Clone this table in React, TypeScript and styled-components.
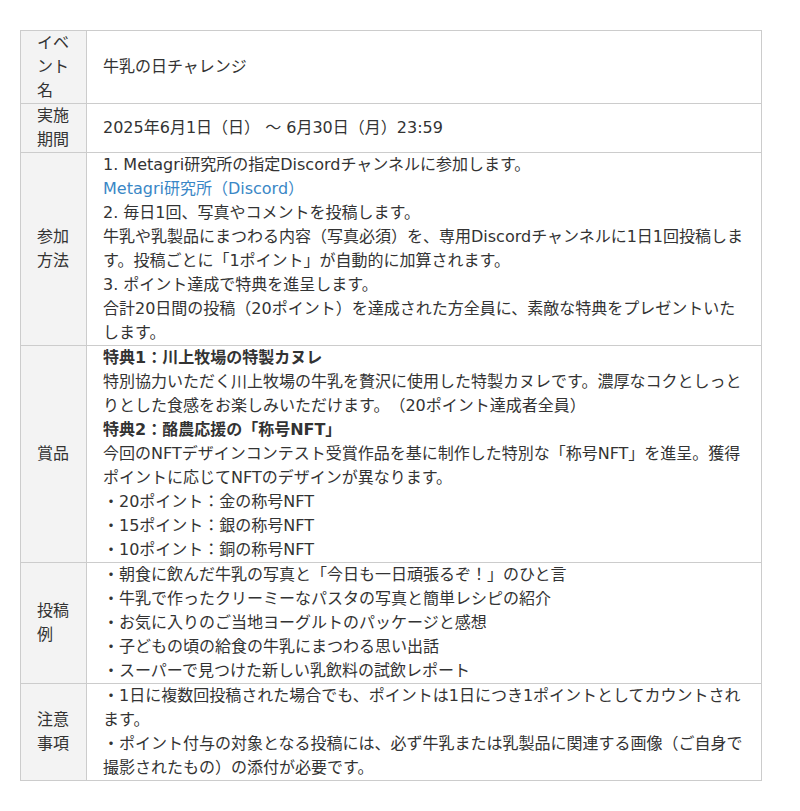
import React from "react";
import styled, { createGlobalStyle } from "styled-components";

const Global = createGlobalStyle`
  html, body { margin: 0; padding: 0; background: #fff; }
  body {
    font-family: "DejaVu Sans", "Noto Sans CJK JP", sans-serif;
    font-size: 16px;
    line-height: 24px;
    color: #333;
    text-spacing-trim: space-all;
  }
`;

const Page = styled.div`
  padding: 30px 20px;
`;

const Table = styled.table`
  width: 742px;
  border-collapse: collapse;
  table-layout: fixed;
`;

const Label = styled.th`
  width: 33px;
  padding: 0 16px;
  background: #f3f3f3;
  border: 1px solid #cccccc;
  font-weight: normal;
  text-align: left;
  vertical-align: middle;
`;

const Cell = styled.td`
  padding: 0 16px;
  border: 1px solid #cccccc;
  vertical-align: middle;
  text-align: left;
`;

const Line = styled.div``;

const Strong = styled.div`
  font-weight: bold;
`;

const Link = styled.a`
  color: #3a87c6;
  text-decoration: none;
`;

export default function App() {
  return (
    <Page>
      <Global />
      <Table>
        <tbody>
          <tr>
            <Label>イベント名</Label>
            <Cell>牛乳の日チャレンジ</Cell>
          </tr>
          <tr>
            <Label>実施期間</Label>
            <Cell>2025年6月1日（日） 〜 6月30日（月）23:59</Cell>
          </tr>
          <tr>
            <Label>参加方法</Label>
            <Cell>
              <Line>1. Metagri研究所の指定Discordチャンネルに参加します。</Line>
              <Line>
                <Link href="#">Metagri研究所（Discord）</Link>
              </Line>
              <Line>2. 毎日1回、写真やコメントを投稿します。</Line>
              <Line>
                牛乳や乳製品にまつわる内容（写真必須）を、専用Discordチャンネルに1日1回投稿します。投稿ごとに「1ポイント」が自動的に加算されます。
              </Line>
              <Line>3. ポイント達成で特典を進呈します。</Line>
              <Line>
                合計20日間の投稿（20ポイント）を達成された方全員に、素敵な特典をプレゼントいたします。
              </Line>
            </Cell>
          </tr>
          <tr>
            <Label>賞品</Label>
            <Cell>
              <Strong>特典1：川上牧場の特製カヌレ</Strong>
              <Line>
                特別協力いただく川上牧場の牛乳を贅沢に使用した特製カヌレです。濃厚なコクとしっとりとした食感をお楽しみいただけます。（20ポイント達成者全員）
              </Line>
              <Strong>特典2：酪農応援の「称号NFT」</Strong>
              <Line>
                今回のNFTデザインコンテスト受賞作品を基に制作した特別な「称号NFT」を進呈。獲得ポイントに応じてNFTのデザインが異なります。
              </Line>
              <Line>・20ポイント：金の称号NFT</Line>
              <Line>・15ポイント：銀の称号NFT</Line>
              <Line>・10ポイント：銅の称号NFT</Line>
            </Cell>
          </tr>
          <tr>
            <Label>投稿例</Label>
            <Cell>
              <Line>・朝食に飲んだ牛乳の写真と「今日も一日頑張るぞ！」のひと言</Line>
              <Line>・牛乳で作ったクリーミーなパスタの写真と簡単レシピの紹介</Line>
              <Line>・お気に入りのご当地ヨーグルトのパッケージと感想</Line>
              <Line>・子どもの頃の給食の牛乳にまつわる思い出話</Line>
              <Line>・スーパーで見つけた新しい乳飲料の試飲レポート</Line>
            </Cell>
          </tr>
          <tr>
            <Label>注意事項</Label>
            <Cell>
              <Line>
                ・1日に複数回投稿された場合でも、ポイントは1日につき1ポイントとしてカウントされます。
              </Line>
              <Line>
                ・ポイント付与の対象となる投稿には、必ず牛乳または乳製品に関連する画像（ご自身で撮影されたもの）の添付が必要です。
              </Line>
            </Cell>
          </tr>
        </tbody>
      </Table>
    </Page>
  );
}
